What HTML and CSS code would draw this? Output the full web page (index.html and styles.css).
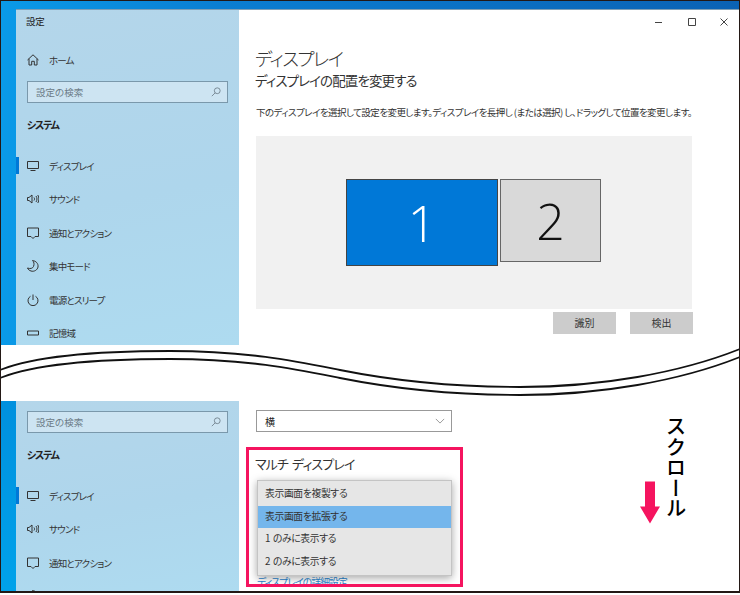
FILE: index.html
```html
<!DOCTYPE html>
<html lang="ja">
<head>
    <meta charset="UTF-8">
    <title>設定 ディスプレイ</title>
    <link rel="stylesheet" href="styles.css">
</head>
<body>
<div class="frame">

    <div class="upper">
        <div class="window">
            <div class="sidebar">
                <div class="app-title">設定</div>
                <div class="nav-item">
                    <svg class="icon" viewBox="0 0 12 12"><path d="M.5 6 6 .8 11.500 6M2 4.800V11h2.700V7.300h2.600V11H10V4.800"/></svg>
                    <span>ホーム</span>
                </div>
                <div class="search search-top">
                    <span>設定の検索</span>
                    <svg class="search-icon" viewBox="0 0 12 12"><circle cx="7.500" cy="4.500" r="3.500"/><path d="M5 7 1 11"/></svg>
                </div>
                <div class="section-title">システム</div>
                <div class="nav-list">
                    <div class="nav-item active">
                        <svg class="icon" viewBox="0 0 12 12"><path d="M.5 1.500h11v7H.5zM3.500 10.500h5"/></svg>
                        <span>ディスプレイ</span>
                    </div>
                    <div class="nav-item">
                        <svg class="icon" viewBox="0 0 12 12"><path d="M.5 4.500h1.500L5 2v8L2 7.500H.5zM7 4.500c.7 1 .7 2 0 3M9 3c1.300 2 1.300 4 0 6M10.800 2c1.500 2.500 1.500 5.500 0 8"/></svg>
                        <span>サウンド</span>
                    </div>
                    <div class="nav-item">
                        <svg class="icon" viewBox="0 0 12 12"><path d="M.5 1h11v8.500H8L6 11.500 4 9.500H.5z"/></svg>
                        <span>通知とアクション</span>
                    </div>
                    <div class="nav-item">
                        <svg class="icon" viewBox="0 0 12 12"><path d="M5.500.5c3.500.5 6 3 5.500 6.500-.5 3-4 5-7 4-1.500-.5-3-1.500-3.500-3 3 1 5 .5 6-1.500 1-2.500.5-4.500-1-6z"/></svg>
                        <span>集中モード</span>
                    </div>
                    <div class="nav-item">
                        <svg class="icon" viewBox="0 0 12 12"><path d="M3.500 2.300a5 5 0 1 0 5 0M6 .5v5.500"/></svg>
                        <span>電源とスリープ</span>
                    </div>
                    <div class="nav-item">
                        <svg class="icon" viewBox="0 0 12 12"><path d="M.5 4h11v4H.5z"/></svg>
                        <span>記憶域</span>
                    </div>
                </div>
            </div>
            <div class="main">
                <div class="win-controls">
                    <svg viewBox="0 0 10 10"><path d="M0 5.500h7"/></svg>
                    <svg viewBox="0 0 10 10"><path d="M1.500 1.500h7v7h-7z"/></svg>
                    <svg viewBox="0 0 10 10"><path d="M1.500 1.500l7 7M8.500 1.500l-7 7"/></svg>
                </div>
                <h1 class="page-title">ディスプレイ</h1>
                <h2 class="page-subtitle">ディスプレイの配置を変更する</h2>
                <p class="page-desc">下のディスプレイを選択して設定を変更します。ディスプレイを長押し (または選択) し、ドラッグして位置を変更します。</p>
                <div class="display-panel">
                    <div class="monitor monitor-one">1</div>
                    <div class="monitor monitor-two">2</div>
                </div>
                <div class="panel-buttons">
                    <div class="btn">識別</div>
                    <div class="btn">検出</div>
                </div>
            </div>
        </div>
    </div>

    <div class="lower">
        <div class="window">
            <div class="sidebar sidebar-lower">
                <div class="search">
                    <span>設定の検索</span>
                    <svg class="search-icon" viewBox="0 0 12 12"><circle cx="7.500" cy="4.500" r="3.500"/><path d="M5 7 1 11"/></svg>
                </div>
                <div class="section-title">システム</div>
                <div class="nav-list">
                    <div class="nav-item active">
                        <svg class="icon" viewBox="0 0 12 12"><path d="M.5 1.500h11v7H.5zM3.500 10.500h5"/></svg>
                        <span>ディスプレイ</span>
                    </div>
                    <div class="nav-item">
                        <svg class="icon" viewBox="0 0 12 12"><path d="M.5 4.500h1.500L5 2v8L2 7.500H.5zM7 4.500c.7 1 .7 2 0 3M9 3c1.300 2 1.300 4 0 6M10.800 2c1.500 2.500 1.500 5.500 0 8"/></svg>
                        <span>サウンド</span>
                    </div>
                    <div class="nav-item">
                        <svg class="icon" viewBox="0 0 12 12"><path d="M.5 1h11v8.500H8L6 11.500 4 9.500H.5z"/></svg>
                        <span>通知とアクション</span>
                    </div>
                    <div class="nav-item">
                        <svg class="icon" viewBox="0 0 12 12"><path d="M5.500.5c3.500.5 6 3 5.500 6.500-.5 3-4 5-7 4-1.500-.5-3-1.500-3.500-3 3 1 5 .5 6-1.500 1-2.500.5-4.500-1-6z"/></svg>
                        <span>集中モード</span>
                    </div>
                </div>
            </div>
            <div class="main main-lower">
                <div class="select">
                    <span>横</span>
                    <svg class="chevron" viewBox="0 0 12 7"><path d="M1 1l5 5 5-5"/></svg>
                </div>
                <div class="highlight-box">
                    <h3 class="multi-title">マルチ ディスプレイ</h3>
                    <div class="dropdown">
                        <div class="option">表示画面を複製する</div>
                        <div class="option selected">表示画面を拡張する</div>
                        <div class="option">1 のみに表示する</div>
                        <div class="option">2 のみに表示する</div>
                    </div>
                    <div class="detail-link">ディスプレイの詳細設定</div>
                </div>
            </div>
        </div>
    </div>

    <!-- annotations on top of the screenshots -->
    <svg class="wave" viewBox="0 0 740 595">
        <path d="M0 370C40 354 110 351 170 351C250 351 300 362 340 370C400 382 460 387 520 387C600 387 680 373 740 349"/>
        <path d="M0 378C40 362 110 359 170 359C250 359 300 370 340 378C400 390 460 395 520 395C600 395 680 381 740 357"/>
    </svg>
    <div class="scroll-label">スクロール</div>
    <svg class="scroll-arrow" viewBox="0 0 20 42"><path d="M5 0h10v25h5L10 42 0 25h5z"/></svg>
</div>
</body>
</html>
```

FILE: styles.css
```css
* {
    box-sizing: border-box;
}

body {
    margin: 0;
    background-color: #fff;
    font-family: "Noto Sans CJK JP", "Noto Sans", sans-serif;
    font-feature-settings: "palt";
    color: #222;
}

.frame {
    position: relative;
    width: 740px;
    height: 593px;
    border: 1px solid #231815;
    border-bottom-width: 2px;
    overflow: hidden;
}

.upper {
    height: 344px;
    padding: 8px 0 0 15px;
    background: linear-gradient(90deg, #0a9ae8 0%, #0a7ed2 30%, #0a62b4 100%);
}

.lower {
    height: 190px;
    margin-top: 56px;
    padding-left: 15px;
    background: linear-gradient(180deg, #0090de 0%, #00a2ea 100%);
}

.upper .window {
    height: 100%;
    border-top: 1px solid #7f9fb5;
}

.window {
    display: flex;
    height: 100%;
    background-color: #fff;
}

/* left column */
.sidebar {
    flex: 0 0 223px;
    background: linear-gradient(170deg, #b4d6ea 0%, #aed6ec 55%, #aedbf0 100%);
    overflow: hidden;
}

.sidebar-lower {
    padding-top: 10px;
}

.app-title {
    height: 33px;
    padding: 4px 0 0 10px;
    font-size: 9.500px;
    letter-spacing: -0.3px;
    line-height: 14px;
}

.nav-list {
    margin-top: 4px;
}

.nav-item {
    position: relative;
    display: flex;
    align-items: center;
    height: 33.500px;
    padding-left: 11px;
    font-size: 9.500px;
    color: #333;
}

.nav-item span {
    margin-left: 10px;
    letter-spacing: -0.8px;
}

.nav-item.active::before {
    content: "";
    position: absolute;
    left: 0;
    top: 8px;
    width: 3px;
    height: 17px;
    background-color: #0078d7;
}

.icon {
    width: 12px;
    height: 12px;
    fill: none;
    stroke: #333;
    stroke-width: 1;
}

.search {
    display: flex;
    align-items: center;
    justify-content: space-between;
    width: 201px;
    height: 22px;
    margin-left: 11px;
    padding: 0 6px 0 8px;
    border: 1.500px solid #7a98ab;
    background-color: #cde4f2;
    font-size: 9.500px;
    color: #6c7c88;
}

.search-top {
    margin-top: 4.500px;
}

.search-icon {
    width: 10px;
    height: 10px;
    fill: none;
    stroke: #6c7c88;
    stroke-width: 1;
}

.section-title {
    display: flex;
    align-items: center;
    height: 42px;
    padding-left: 11px;
    font-size: 10px;
    font-weight: 700;
    letter-spacing: -1.300px;
    color: #222;
}

/* right column */
.main {
    position: relative;
    flex: 1;
    padding: 37px 0 0 17px;
}

.win-controls {
    position: absolute;
    top: 7px;
    right: 10px;
    display: flex;
    gap: 22px;
}

.win-controls svg {
    width: 10px;
    height: 10px;
    fill: none;
    stroke: #444;
    stroke-width: 1;
}

.page-title {
    margin: 0 0 0 -1px;
    font-size: 18.500px;
    font-weight: 300;
    letter-spacing: -1.500px;
    line-height: 23px;
    color: #333;
}

.page-subtitle {
    margin: 0 0 0 -1px;
    font-size: 13.500px;
    font-weight: 400;
    letter-spacing: -0.900px;
    line-height: 20px;
    color: #333;
}

.page-desc {
    margin: 14px 0 0 0;
    font-size: 9.500px;
    letter-spacing: -0.550px;
    line-height: 16px;
    white-space: nowrap;
    color: #333;
}

.display-panel {
    display: flex;
    align-items: flex-start;
    gap: 2px;
    width: 436px;
    height: 173px;
    margin: 16px 0 0 0;
    padding: 43px 0 0 90px;
    background-color: #f1f1f1;
}

.monitor {
    display: flex;
    align-items: center;
    justify-content: center;
    border: 1px solid #444;
    font-size: 50px;
    font-weight: 300;
    font-family: "Open Sans", sans-serif;
}

.monitor-one {
    width: 152px;
    height: 87px;
    background-color: #0078d7;
    color: #fff;
}

.monitor-two {
    width: 101px;
    height: 83px;
    background-color: #d9d9d9;
    border-color: #666;
    color: #111;
}

.panel-buttons {
    display: flex;
    justify-content: flex-end;
    gap: 14px;
    width: 437px;
    margin: 3px 0 0 0;
}

.btn {
    width: 63px;
    height: 22px;
    background-color: #cccccc;
    font-size: 10px;
    line-height: 22px;
    text-align: center;
    color: #333;
}

.main-lower {
    padding: 9px 0 0 17px;
}

.select {
    display: flex;
    align-items: center;
    justify-content: space-between;
    width: 196px;
    height: 22px;
    padding: 0 6px 0 8px;
    border: 1.500px solid #999;
    font-size: 10px;
}

.chevron {
    width: 10px;
    height: 6px;
    fill: none;
    stroke: #888;
    stroke-width: 1;
}

.highlight-box {
    width: 217px;
    height: 140px;
    margin: 15px 0 0 -10px;
    border: 3px solid #f5145f;
    overflow: hidden;
}

.multi-title {
    margin: 0;
    padding-left: 6px;
    font-size: 13px;
    font-weight: 400;
    letter-spacing: -0.900px;
    word-spacing: 2px;
    line-height: 28px;
    color: #333;
}

.dropdown {
    position: relative;
    width: 195px;
    height: 96px;
    margin: 2px 0 0 8px;
    padding-top: 2px;
    border: 1px solid #c4c4c4;
    background-color: #e6e6e6;
    box-shadow: 0 2px 8px rgba(0, 0, 0, 0.35);
}

.option {
    height: 22.500px;
    padding-left: 7px;
    font-size: 9.800px;
    letter-spacing: -0.350px;
    word-spacing: 1px;
    line-height: 20.500px;
    color: #333;
}

.option.selected {
    background-color: #74b6ec;
}

.detail-link {
    margin: -1px 0 0 8px;
    font-size: 9.800px;
    letter-spacing: -0.900px;
    line-height: 14px;
    color: #2a86cf;
}

/* wave cut and scroll note */
.wave {
    position: absolute;
    left: -1px;
    top: -1px;
    width: 740px;
    height: 595px;
    fill: none;
    stroke: #111;
    stroke-width: 1.800;
    pointer-events: none;
}

.scroll-label {
    position: absolute;
    left: 662px;
    top: 415px;
    writing-mode: vertical-rl;
    font-size: 20.500px;
    font-weight: 500;
    font-feature-settings: normal;
    line-height: 26px;
    color: #000;
}

.scroll-arrow {
    position: absolute;
    left: 639px;
    top: 480px;
    width: 20px;
    height: 43px;
    fill: #f5145f;
}
```
